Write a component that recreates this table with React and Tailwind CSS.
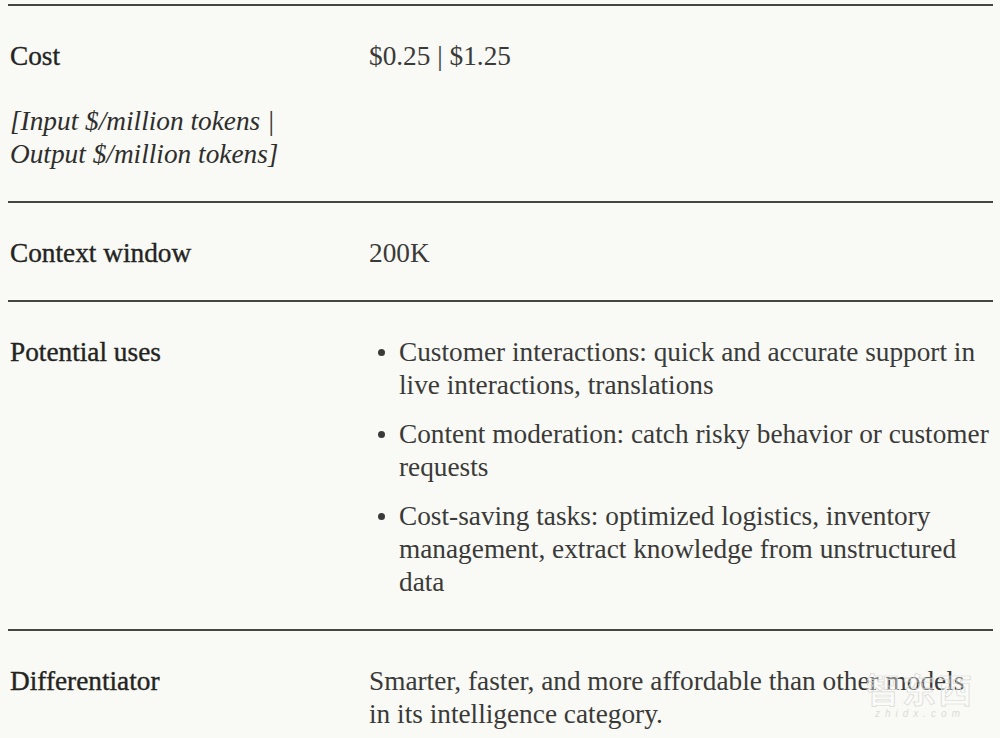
import React from "react";

const serif = { fontFamily: '"Liberation Serif", "Times New Roman", serif' };

function Row({ label, children, extra }) {
  return (
    <div className="flex border-t-2 border-[#454543] pt-[34px] pb-[30px]">
      <div className="w-[361px] shrink-0 pl-[2px]">
        <div className="text-[#232321] [-webkit-text-stroke:0.35px_#232321] whitespace-nowrap">{label}</div>
        {extra}
      </div>
      <div className="flex-1 text-[#3a3a38]">{children}</div>
    </div>
  );
}

function Bullet({ lines }) {
  return (
    <li className="flex">
      <div className="w-[30px] shrink-0 flex items-start">
        <span className="mt-[13px] ml-[9px] w-[7px] h-[7px] rounded-full bg-[#3a3a38]" />
      </div>
      <div className="whitespace-nowrap">
        {lines.map((l, i) => (
          <div key={i}>{l}</div>
        ))}
      </div>
    </li>
  );
}

export default function App() {
  return (
    <div
      className="relative w-[1000px] h-[738px] overflow-hidden bg-[#f9f9f6] text-[27.3px] leading-[33px]"
      style={serif}
    >
      <div className="ml-[8px] w-[985px] pt-[4px]">
        <Row
          label="Cost"
          extra={
            <div className="mt-[32px] italic text-[#2e2e2c] whitespace-nowrap">
              <div>[Input $/million tokens |</div>
              <div>Output $/million tokens]</div>
            </div>
          }
        >
          <div>$0.25 | $1.25</div>
        </Row>
        <Row label="Context window">
          <div>200K</div>
        </Row>
        <Row label="Potential uses">
          <ul className="flex flex-col gap-[16px]">
            <Bullet
              lines={[
                "Customer interactions: quick and accurate support in",
                "live interactions, translations",
              ]}
            />
            <Bullet
              lines={[
                "Content moderation: catch risky behavior or customer",
                "requests",
              ]}
            />
            <Bullet
              lines={[
                "Cost-saving tasks: optimized logistics, inventory",
                "management, extract knowledge from unstructured",
                "data",
              ]}
            />
          </ul>
        </Row>
        <Row label="Differentiator">
          <div className="whitespace-nowrap">
            <div>Smarter, faster, and more affordable than other models</div>
            <div>in its intelligence category.</div>
          </div>
        </Row>
      </div>
      <div className="absolute left-[866px] top-[669px] flex flex-col items-center pointer-events-none">
        <div
          className="text-[34px] leading-[40px] font-bold text-[#ffffff]/35 [-webkit-text-stroke:0.7px_#d8d8d3] tracking-[2px]"
          style={{ fontFamily: '"Noto Sans CJK SC", sans-serif' }}
        >
          智东西
        </div>
        <div
          className="text-[10px] leading-[10px] tracking-[5px] text-[#dcdcd7] italic"
          style={{ fontFamily: '"Liberation Sans", sans-serif' }}
        >
          zhidx.com
        </div>
      </div>
    </div>
  );
}
